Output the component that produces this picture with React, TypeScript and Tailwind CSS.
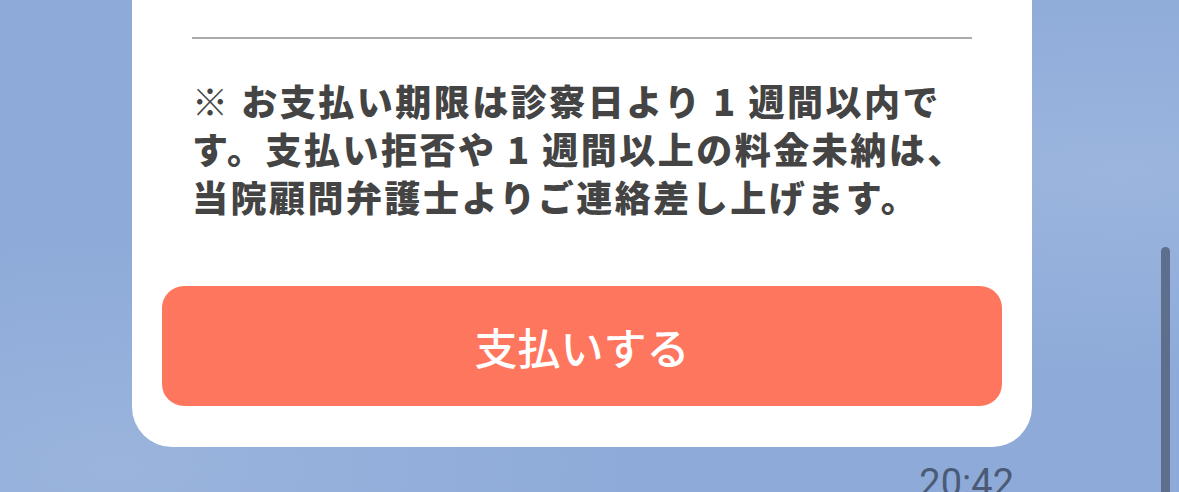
export default function App() {
  return (
    <div className="relative h-[492px] w-[1179px] overflow-hidden bg-[#8eaad8] bg-[radial-gradient(ellipse_at_95%_35%,#9bb5de_0%,transparent_45%),radial-gradient(ellipse_at_10%_95%,#9ab4dd_0%,transparent_35%)]">
      {/* message bubble */}
      <div className="ml-[132px] w-[900px] rounded-b-[40px] bg-white px-[60px] pt-[37px] pb-[41px]">
        <div className="h-[2px] bg-[#ababab]" />
        <p
          className="mt-[37px] text-[36px] leading-[48px] font-black tracking-[2.5px] text-[#444444]"
          style={{ fontFamily: '"Noto Sans CJK JP", "Noto Sans", sans-serif' }}
        >
          ※ お支払い期限は診察日より 1 週間以内で<br />
          す。支払い拒否や 1 週間以上の料金未納は、<br />
          当院顧問弁護士よりご連絡差し上げます。
        </p>
        <button
          className="-mx-[30px] mt-[66px] flex h-[120px] w-[840px] items-center justify-center rounded-[22px] bg-[#ff765e] text-[43px] font-medium text-white"
          style={{ fontFamily: '"Noto Sans CJK JP", "Noto Sans", sans-serif' }}
        >
          支払いする
        </button>
      </div>

      {/* timestamp */}
      <div className="mt-[17px] flex w-[1014px] justify-end">
        <span className="text-[38px] leading-none text-[#4b5b76]" style={{ fontFamily: "Roboto, sans-serif" }}>
          20:42
        </span>
      </div>

      {/* scrollbar */}
      <div className="absolute left-[1161px] top-[247px] h-[300px] w-[9px] rounded-full bg-[#5e6f8e]" />
    </div>
  );
}
